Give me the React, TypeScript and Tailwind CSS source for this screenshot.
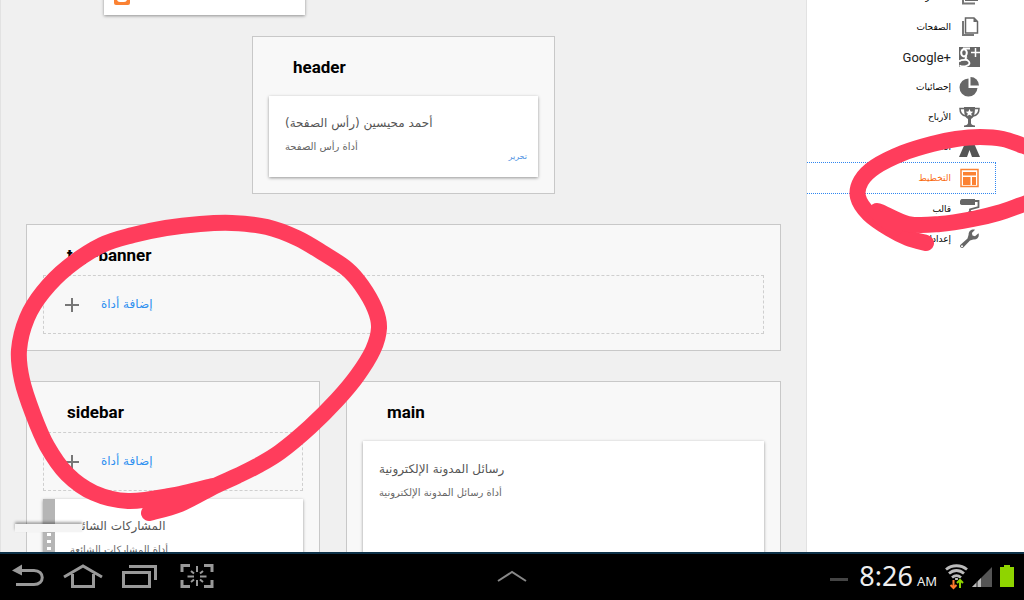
import type { ReactNode } from "react";

const arabic = "font-['DejaVu_Sans',sans-serif]";

function Panel({ title, className, children }: { title: string; className: string; children: ReactNode }) {
  return (
    <section className={`flex flex-col border border-[#c8c8c8] bg-[#f8f8f8] px-4 pb-4 ${className}`}>
      <h2 className="pt-[19px] pb-px pl-6 text-[17px] leading-[22px] font-bold text-black">{title}</h2>
      {children}
    </section>
  );
}

function Widget({ title, subtitle, className, children }: { title: string; subtitle: string; className: string; children?: ReactNode }) {
  return (
    <article className={`relative bg-white shadow-[0_1px_3px_rgba(0,0,0,0.4)] ${className}`}>
      <h3 dir="rtl" className={`text-left text-[12px] leading-6 text-[#555] ${arabic}`}>{title}</h3>
      <p dir="rtl" className={`text-left text-[10px] leading-6 text-[#666] ${arabic}`}>{subtitle}</p>
      {children}
    </article>
  );
}

function AddWidget() {
  return (
    <a href="#add" className="mt-2 flex h-[59px] items-center gap-[22px] border border-dashed border-[#cfcfcf] pl-[21px]">
      <svg width="14" height="14" viewBox="0 0 14 14" stroke="#777" strokeWidth="2" aria-hidden="true">
        <path d="M7 0v14M0 7h14" />
      </svg>
      <span dir="rtl" className={`pb-0.5 text-[12px] leading-4 text-[#2f90f0] ${arabic}`}>إضافة أداة</span>
    </a>
  );
}

const icons: Record<string, ReactNode> = {
  posts: (
    <>
      <path d="M4 2v14.500h12" fill="none" stroke="#777" strokeWidth="2" />
      <path d="M6 0h13v14H6z" fill="#666" />
      <path d="M8 11.500h9" stroke="#fff" />
    </>
  ),
  pages: (
    <>
      <path d="M4 4v14h11" fill="none" stroke="#777" strokeWidth="2" />
      <path d="M6.500 1H15l3.500 3.500V16h-12z" fill="#fff" stroke="#666" strokeWidth="1.500" />
      <path d="M14.500 1v4h4z" fill="#666" />
    </>
  ),
  plus: (
    <>
      <path d="M0 0h21v20H0z" fill="#666" />
      <ellipse cx="5" cy="5.800" rx="2.800" ry="3.600" fill="none" stroke="#fff" strokeWidth="2" />
      <path d="M4 1.500h7M8 9.500c-4.500 2.500 2.500 3.500 2.500 6.500 0 3-6 4.500-10 2.500M0 14.500c2-2 5-1.500 8-1.500" fill="none" stroke="#fff" strokeWidth="1.800" />
      <path d="M16.500 1v9M12 5.500h9" stroke="#fff" strokeWidth="1.500" />
    </>
  ),
  stats: (
    <>
      <path d="M9.500 1.500A9 9 0 1 0 18.500 11h-9z" fill="#666" />
      <path d="M11.500 0v8.500H20A8.500 8.500 0 0 0 11.500 0z" fill="#666" />
    </>
  ),
  trophy: (
    <>
      <path d="M5 0h11c0 7-1 10.500-4 12v4c0 1.500 1.500 2.500 4 2.500V20H5v-1.500c2.500 0 4-1 4-2.500v-4C6 10.500 5 7 5 0z" fill="#666" />
      <path d="M5 1.500H1C1 6 3 8.500 7 9M16 1.500h4C20 6 18 8.500 14 9" fill="none" stroke="#666" strokeWidth="1.500" />
      <path d="M10.500 2l1.100 2.500 2.700.2-2.100 1.800.7 2.600-2.400-1.400-2.400 1.400.7-2.600-2.100-1.800 2.700-.2z" fill="#fff" />
    </>
  ),
  campaigns: <path d="M7 0h7v4l7 16h-8l-2.500-7L8 20H0L7 4z" fill="#555" />,
  layout: (
    <>
      <path d="M2 1.500h17v17H2z" fill="#fff" stroke="#fb8233" strokeWidth="1.500" />
      <path d="M4 4h13v3.500H4zM4 9h7.500v8H4zM13 9h4v8h-4z" fill="#fb8233" />
    </>
  ),
  template: (
    <>
      <path d="M1 1.500L2.500 0H16v6H2.500L1 5z" fill="#666" />
      <path d="M16 2h3.500v6L11 10.500V14" fill="none" stroke="#666" strokeWidth="1.800" />
      <path d="M9.500 12H13v8H9.500z" fill="#666" />
    </>
  ),
  settings: (
    <path d="M19.500 4.200l-3.500 3-2.500-.7-.6-2.500L16 .8c-3-1-6.500 1-6.400 5L8.500 9.500l-7 6.200c-1.600 1.800.8 4.400 2.800 2.700l6.700-7 3.300-.9c4 .4 6.500-2.800 5.200-6.300zM3 18.200a1 1 0 1 1 0-2 1 1 0 0 1 0 2z" fill="#666" />
  ),
};

const items = [
  { icon: "posts", label: "المشاركات" },
  { icon: "pages", label: "الصفحات" },
  { icon: "plus", label: "Google+" },
  { icon: "stats", label: "إحصائيات" },
  { icon: "trophy", label: "الأرباح" },
  { icon: "campaigns", label: "الحملات" },
  { icon: "layout", label: "التخطيط" },
  { icon: "template", label: "قالب" },
  { icon: "settings", label: "إعدادات" },
];

function itemStyle(icon: string) {
  if (icon === "layout") return `h-8 border-y border-l-0 border-r border-dotted border-[#2f86f0] pr-[15px] text-[9px] text-[#f96a10] ${arabic}`;
  if (icon === "plus") return "h-[30px] pr-4 text-[13px] text-[#222]";
  return `h-[30px] pr-4 text-[9px] text-black ${arabic}`;
}

type Point = [number, number];

const widgetLoop: Point[] = [
  [213, 486], [170, 496], [128, 501], [94, 493], [67, 474], [47, 446], [33, 414], [22, 380], [19, 350],
  [27, 318], [43, 292], [68, 267], [102, 245], [133, 235], [166, 228], [200, 224], [232, 223], [267, 227],
  [297, 238], [323, 253], [347, 269], [362, 286], [375, 309], [379, 328], [373, 350], [357, 376],
  [337, 400], [310, 427], [280, 452], [257, 466], [237, 476], [215, 486], [180, 504], [149, 513],
];
const menuLoopTop: Point[] = [
  [1040, 151], [1024, 146], [1003, 139], [980, 137], [956, 139], [932, 144], [903, 153], [875, 167],
  [861, 181], [858, 197], [869, 214], [890, 229], [908, 238], [926, 243],
];
const menuLoopBottom: Point[] = [[1040, 199], [1024, 204], [998, 213], [973, 219], [940, 224], [908, 224], [877, 211], [895, 228]];

function smoothPath(points: Point[]) {
  let d = `M${points[0].join(" ")}`;
  for (let i = 0; i < points.length - 1; i++) {
    const before = points[Math.max(i - 1, 0)];
    const from = points[i];
    const to = points[i + 1];
    const after = points[Math.min(i + 2, points.length - 1)];
    d += `C${from[0] + (to[0] - before[0]) / 6} ${from[1] + (to[1] - before[1]) / 6} ${to[0] - (after[0] - from[0]) / 6} ${to[1] - (after[1] - from[1]) / 6} ${to[0]} ${to[1]}`;
  }
  return d;
}

export default function App() {
  return (
    <div className="relative flex h-screen flex-col overflow-hidden bg-white font-['Roboto',sans-serif]">
      <div className="flex min-h-0 flex-1 overflow-hidden">
        <main className="flex min-w-0 flex-1 flex-col overflow-hidden border-x border-[#e2e2e2] bg-[#f0f0f0] px-[25px]">
          <div className="-mt-6 ml-[78px] flex h-[39px] w-[201px] shrink-0 items-end bg-white pb-[10px] pl-[10px] shadow-[0_1px_3px_rgba(0,0,0,0.4)]">
            <svg width="16" height="16" viewBox="0 0 16 16" aria-hidden="true">
              <rect width="16" height="16" rx="2" fill="#fb8233" />
              <path d="M6 3h3c2 0 3 1 3 3 0 1 1 1 1 2v2c0 2-1 3-3 3H6c-2 0-3-1-3-3V6c0-2 1-3 3-3z" fill="#fff" />
            </svg>
          </div>

          <Panel title="header" className="mt-[21px] w-[303px] shrink-0 self-center">
            <Widget title="أحمد محيسين (رأس الصفحة)" subtitle="أداة رأس الصفحة" className="mt-[17px] h-[81px] px-4 pt-[15px]">
              <a href="#edit" dir="rtl" className={`absolute right-[11px] bottom-[14px] text-[8px] leading-3 text-[#4a90e2] ${arabic}`}>تحرير</a>
            </Widget>
          </Panel>

          <Panel title="top-banner" className="mt-[30px] shrink-0">
            <AddWidget />
          </Panel>

          <div className="mt-[30px] flex shrink-0 gap-[26px]">
            <Panel title="sidebar" className="w-[294px]">
              <AddWidget />
              <Widget title="المشاركات الشائعة" subtitle="أداة المشاركات الشائعة" className="mt-2 h-[81px] border-l-12 border-l-[#b5b5b5] pt-[15px] pl-[15px]">
                <div className="absolute top-[34px] -left-2 flex flex-col gap-1">
                  <i className="h-[3px] w-1 bg-white" />
                  <i className="h-[3px] w-1 bg-white" />
                  <i className="h-[3px] w-1 bg-white" />
                  <i className="h-[3px] w-1 bg-white" />
                </div>
              </Widget>
            </Panel>
            <Panel title="main" className="min-w-0 flex-1">
              <Widget title="رسائل المدونة الإلكترونية" subtitle="أداة رسائل المدونة الإلكترونية" className="mt-[17px] h-40 px-4 pt-4" />
            </Panel>
          </div>
        </main>

        <nav dir="rtl" aria-label="القائمة" className="w-[217px] shrink-0 overflow-hidden bg-white pr-7">
          <ul className="-mt-[18px]">
            {items.map(({ icon, label }) => (
              <li key={icon}>
                <a href={`#${icon}`} className={`flex items-center gap-2 ${itemStyle(icon)}`}>
                  <svg width="21" height="20" viewBox="0 0 21 20" className="shrink-0" aria-hidden="true">{icons[icon]}</svg>
                  <span dir={icon === "plus" ? "ltr" : "rtl"} className="pt-0.5">{label}</span>
                </a>
              </li>
            ))}
          </ul>
        </nav>
      </div>

      <div className="absolute top-[524px] left-[15px] h-2 w-[67px] bg-[#f4f4f4] shadow-[0_-2px_3px_rgba(0,0,0,0.35)]" />

      <svg className="pointer-events-none absolute top-0 left-0" width="1024" height="552" viewBox="0 0 1024 552" fill="none" stroke="#ff3d5c" strokeWidth="16" strokeLinecap="round" strokeLinejoin="round" aria-hidden="true">
        <path d={smoothPath(widgetLoop)} />
        <path d={smoothPath(menuLoopTop)} />
        <path d={smoothPath(menuLoopBottom)} />
      </svg>

      <footer className="flex h-12 shrink-0 items-center border-t-2 border-[#0d3148] bg-black px-[10px]">
        <div className="flex flex-1 items-center gap-[19px] pb-0.5">
          <button type="button" aria-label="Back">
            <svg width="34" height="26" viewBox="0 0 34 26" fill="none" stroke="#999" strokeWidth="3">
              <path d="M10 7.500h14c11 0 11 14 0 14H6" /><path d="M2 7.500l10-6v11z" fill="#999" stroke="none" />
            </svg>
          </button>
          <button type="button" aria-label="Home">
            <svg width="40" height="26" viewBox="0 0 40 26" fill="none" stroke="#999" strokeWidth="3">
              <path d="M1 14L20 3l19 11M9.500 11v12.500h21V11" />
            </svg>
          </button>
          <button type="button" aria-label="Recent apps">
            <svg width="35" height="26" viewBox="0 0 35 26" fill="none" stroke="#999" strokeWidth="3">
              <path d="M1.500 9.500h26v14h-26zM7 3.500h26.500V17" />
            </svg>
          </button>
          <button type="button" aria-label="Screenshot" className="ml-1">
            <svg width="34" height="26" viewBox="0 0 34 26" fill="none" stroke="#999" strokeWidth="3">
              <path d="M10 2.500H2V9M24 2.500h8V9M10 23.500H2V17M24 23.500h8V17" />
              <path d="M17 3v6M17 17v6M7.500 13.500H14M20 13.500h6.500M11 8l3 2.500M23 8l-3 2.500M11 19l3-2.500M23 19l-3-2.500" strokeWidth="2" />
            </svg>
          </button>
        </div>
        <button type="button" aria-label="Open mini apps">
          <svg width="30" height="16" viewBox="0 0 30 16" fill="none" stroke="#888" strokeWidth="2"><path d="M1 12L15 3l14 9" /></svg>
        </button>
        <div className="flex flex-1 items-center justify-end font-['Noto_Sans',sans-serif] text-[#eee]">
          <div className="mt-1 mr-[11px] h-[3px] w-[18px] bg-[#444]" />
          <time className="flex items-baseline gap-1 pt-0.5 text-[27px] leading-8">
            8:26<span className="text-[13px]">AM</span>
          </time>
          <svg className="ml-2 shrink-0" width="23" height="26" viewBox="0 0 23 26" fill="none" stroke="#bbb" strokeWidth="2.800" aria-hidden="true">
            <path d="M1 5.500c6-5 15-5 21 0M4 9.500c4.500-4 10.500-4 15 0M7 13.500c3-2.500 6-2.500 9 0" />
            <path d="M11.500 14v2" />
            <path d="M8.500 16v8M5.500 21l3 3 3-3" stroke="#ff7a2c" strokeWidth="2" />
            <path d="M15 24v-8M12 19l3-3 3 3" stroke="#8fd400" strokeWidth="2" />
          </svg>
          <svg className="ml-1 shrink-0" width="20" height="20" viewBox="0 0 20 20" aria-hidden="true">
            <path d="M0 20L20 0v20z" fill="#555" /><path d="M0 20L9 11v9z" fill="#bbb" /><path d="M5 14v6" stroke="#222" />
          </svg>
          <svg className="mb-0.5 ml-2 shrink-0" width="14" height="22" viewBox="0 0 14 22" fill="#8fd400" aria-hidden="true">
            <path d="M4 0h6v2h4v20H0V2h4z" />
          </svg>
        </div>
      </footer>
    </div>
  );
}
